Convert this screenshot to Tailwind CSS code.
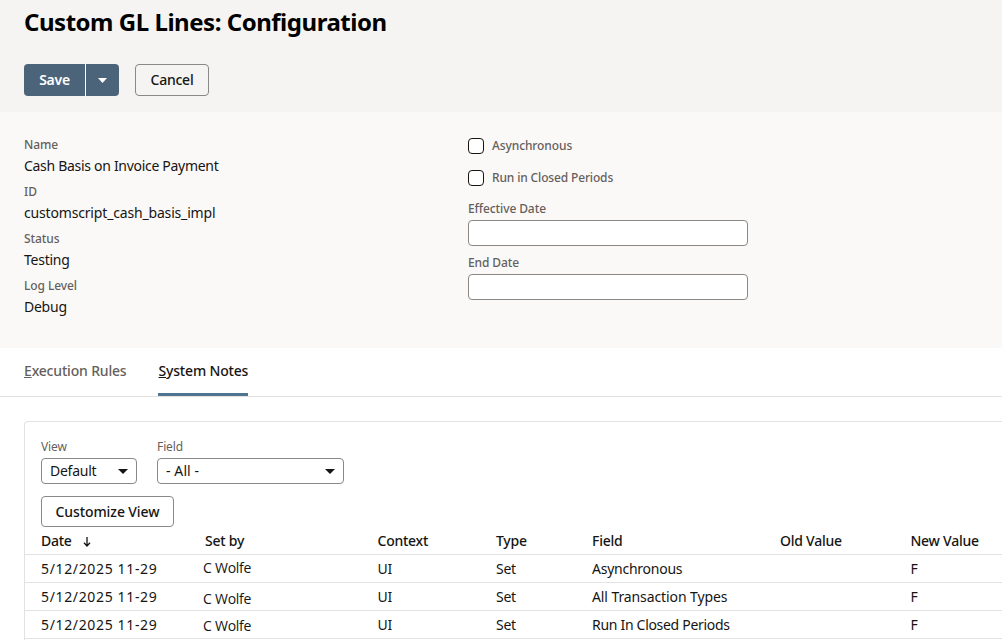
<!DOCTYPE html>
<html>
<head>
<meta charset="utf-8">
<script src="https://cdn.jsdelivr.net/npm/@tailwindcss/browser@4"></script>
</head>
<body class="bg-white font-['Noto_Sans',sans-serif] text-[#161513] overflow-hidden tracking-[-0.25px]">
<div class="w-[1002px] h-[640px] overflow-hidden">
  <header class="h-[112px] bg-[#f5f4f2] px-6 flex flex-col">
    <h1 class="h-[64px] pt-[6px] text-[24px] leading-[32px] font-bold text-black tracking-[-0.47px]">Custom GL Lines: Configuration</h1>
    <div class="flex items-start">
      <div class="flex h-8 w-[95px] rounded-[4px] overflow-hidden bg-[#4c6479] text-white">
        <button class="w-[62px] pb-[2px] border-r border-white text-[14px] font-semibold">Save</button>
        <button class="flex-1 flex items-center justify-center">
          <svg width="9" height="5" viewBox="0 0 9 5"><path d="M0 0h9L4.500 5z" fill="#fff"/></svg>
        </button>
      </div>
      <button class="ml-4 h-8 w-[74px] pb-[2px] rounded-[4px] border border-[#8a8886] text-[14px] font-medium">Cancel</button>
    </div>
  </header>

  <section class="h-[236px] bg-[#fbf9f8] px-6 pt-[24px] flex">
    <div class="w-[444px]">
      <div class="text-[12px] leading-[18px] font-medium text-[#655f5c] tracking-[-0.1px]">Name</div>
      <div class="mt-[2px] h-[27px] text-[14px] leading-[20px] tracking-[-0.3px]">Cash Basis on Invoice Payment</div>
      <div class="text-[12px] leading-[18px] font-medium text-[#655f5c] tracking-[-0.1px]">ID</div>
      <div class="mt-[2px] h-[27px] text-[14px] leading-[20px] tracking-[-0.17px]">customscript_cash_basis_impl</div>
      <div class="text-[12px] leading-[18px] font-medium text-[#655f5c] tracking-[-0.1px]">Status</div>
      <div class="mt-[2px] h-[27px] text-[14px] leading-[20px]">Testing</div>
      <div class="text-[12px] leading-[18px] font-medium text-[#655f5c] tracking-[-0.1px]">Log Level</div>
      <div class="mt-[2px] text-[14px] leading-[20px]">Debug</div>
    </div>
    <div class="w-[280px] pt-[2px]">
      <div class="flex items-center h-[16px]">
        <span class="w-4 h-4 rounded-[4px] border border-[#161513] bg-white"></span>
        <span class="ml-2 text-[12px] font-medium text-[#655f5c] tracking-[-0.1px]">Asynchronous</span>
      </div>
      <div class="mt-[16px] flex items-center h-[16px]">
        <span class="w-4 h-4 rounded-[4px] border border-[#161513] bg-white"></span>
        <span class="ml-2 text-[12px] font-medium text-[#655f5c] tracking-[-0.15px]">Run in Closed Periods</span>
      </div>
      <div class="mt-[14px] h-[20px] text-[12px] leading-[18px] font-medium text-[#655f5c] tracking-[-0.1px]">Effective Date</div>
      <div class="h-[26px] rounded-[4px] border border-[#8a8886] bg-white"></div>
      <div class="mt-[8px] h-[20px] text-[12px] leading-[18px] font-medium text-[#655f5c] tracking-[-0.1px]">End Date</div>
      <div class="h-[26px] rounded-[4px] border border-[#8a8886] bg-white"></div>
    </div>
  </section>

  <nav class="h-[49px] border-b border-[#e4e2e0] px-6 flex gap-[32px] text-[14px] font-medium">
    <div class="h-[48px] pt-[12px] leading-[22px] text-[#655f5c] tracking-[-0.18px]"><span class="underline">E</span>xecution Rules</div>
    <div class="h-[48px] pt-[12px] leading-[22px] border-b-[3px] border-[#4f7490] font-medium tracking-[-0.17px]"><span class="underline">S</span>ystem Notes</div>
  </nav>

  <section class="pl-6 pt-[24px]">
    <div class="rounded-tl-[4px] border-l border-t border-[#e4e2e0] h-[300px] w-[990px]">
      <div class="pl-4 pt-4 flex gap-[20px]">
        <div>
          <div class="text-[12px] leading-[18px] text-[#655f5c] tracking-[-0.1px]">View</div>
          <div class="mt-[2px] w-[96px] h-[26px] rounded-[4px] border border-[#8a8886] flex items-center justify-between pl-2 pr-[8px] text-[14px]">
            <span class="pb-[1px]">Default</span><svg width="10" height="5" viewBox="0 0 10 5"><path d="M0 0h10L5 5z" fill="#161513"/></svg>
          </div>
        </div>
        <div>
          <div class="text-[12px] leading-[18px] text-[#655f5c] tracking-[-0.1px]">Field</div>
          <div class="mt-[2px] w-[187px] h-[26px] rounded-[4px] border border-[#8a8886] flex items-center justify-between pl-2 pr-[8px] text-[14px]">
            <span class="pb-[1px] tracking-[0.1px]">- All -</span><svg width="10" height="5" viewBox="0 0 10 5"><path d="M0 0h10L5 5z" fill="#161513"/></svg>
          </div>
        </div>
      </div>
      <button class="ml-4 mt-3 w-[133px] h-[31px] rounded-[4px] border border-[#8a8886] text-[14px] font-medium tracking-[-0.1px]">Customize View</button>
      <div class="grid grid-cols-[180px_172.500px_118.500px_96px_188px_130.500px_91.500px] text-[14px]">
        <div class="h-[28px] pl-4 pt-[4px] leading-[20px] font-medium border-b border-[#e4e2e0] flex items-start gap-[11px]">Date
          <svg class="mt-[6px]" width="8" height="10" viewBox="0 0 8 10"><path d="M4 0v9M1 5.800 4 9l3-3.200" fill="none" stroke="#161513" stroke-width="1.300"/></svg>
        </div>
        <div class="h-[28px] pt-[4px] leading-[20px] font-medium border-b border-[#e4e2e0]">Set by</div>
        <div class="h-[28px] pt-[4px] leading-[20px] font-medium border-b border-[#e4e2e0]">Context</div>
        <div class="h-[28px] pt-[4px] leading-[20px] font-medium border-b border-[#e4e2e0]">Type</div>
        <div class="h-[28px] pt-[4px] leading-[20px] font-medium border-b border-[#e4e2e0]">Field</div>
        <div class="h-[28px] pt-[4px] leading-[20px] font-medium border-b border-[#e4e2e0]">Old Value</div>
        <div class="h-[28px] pt-[4px] leading-[20px] font-medium border-b border-[#e4e2e0]">New Value</div>

        <div class="h-[28px] pl-4 pt-[4px] leading-[20px] border-b border-[#e4e2e0] tracking-[0.65px]">5/12/2025 11-29</div>
        <div class="h-[28px] pt-[3px] leading-[20px] border-b border-[#e4e2e0] -ml-[2px] font-['Open_Sans',sans-serif]">C Wolfe</div>
        <div class="h-[28px] pt-[4px] leading-[20px] border-b border-[#e4e2e0]">UI</div>
        <div class="h-[28px] pt-[4px] leading-[20px] border-b border-[#e4e2e0]">Set</div>
        <div class="h-[28px] pt-[4px] leading-[20px] border-b border-[#e4e2e0]">Asynchronous</div>
        <div class="h-[28px] border-b border-[#e4e2e0]"></div>
        <div class="h-[28px] pt-[4px] leading-[20px] border-b border-[#e4e2e0]">F</div>

        <div class="h-[28px] pl-4 pt-[4px] leading-[20px] border-b border-[#e4e2e0] tracking-[0.65px]">5/12/2025 11-29</div>
        <div class="h-[28px] pt-[6px] leading-[20px] border-b border-[#e4e2e0] -ml-[2px] font-['Open_Sans',sans-serif]">C Wolfe</div>
        <div class="h-[28px] pt-[4px] leading-[20px] border-b border-[#e4e2e0]">UI</div>
        <div class="h-[28px] pt-[4px] leading-[20px] border-b border-[#e4e2e0]">Set</div>
        <div class="h-[28px] pt-[4px] leading-[20px] border-b border-[#e4e2e0] tracking-[-0.1px]">All Transaction Types</div>
        <div class="h-[28px] border-b border-[#e4e2e0]"></div>
        <div class="h-[28px] pt-[4px] leading-[20px] border-b border-[#e4e2e0]">F</div>

        <div class="h-[28px] pl-4 pt-[4px] leading-[20px] border-b border-[#e4e2e0] tracking-[0.65px]">5/12/2025 11-29</div>
        <div class="h-[28px] pt-[5px] leading-[20px] border-b border-[#e4e2e0] -ml-[2px] font-['Open_Sans',sans-serif]">C Wolfe</div>
        <div class="h-[28px] pt-[4px] leading-[20px] border-b border-[#e4e2e0]">UI</div>
        <div class="h-[28px] pt-[4px] leading-[20px] border-b border-[#e4e2e0]">Set</div>
        <div class="h-[28px] pt-[4px] leading-[20px] border-b border-[#e4e2e0] tracking-[-0.3px]">Run In Closed Periods</div>
        <div class="h-[28px] border-b border-[#e4e2e0]"></div>
        <div class="h-[28px] pt-[4px] leading-[20px] border-b border-[#e4e2e0]">F</div>
      </div>
    </div>
  </section>
</div>
</body>
</html>
